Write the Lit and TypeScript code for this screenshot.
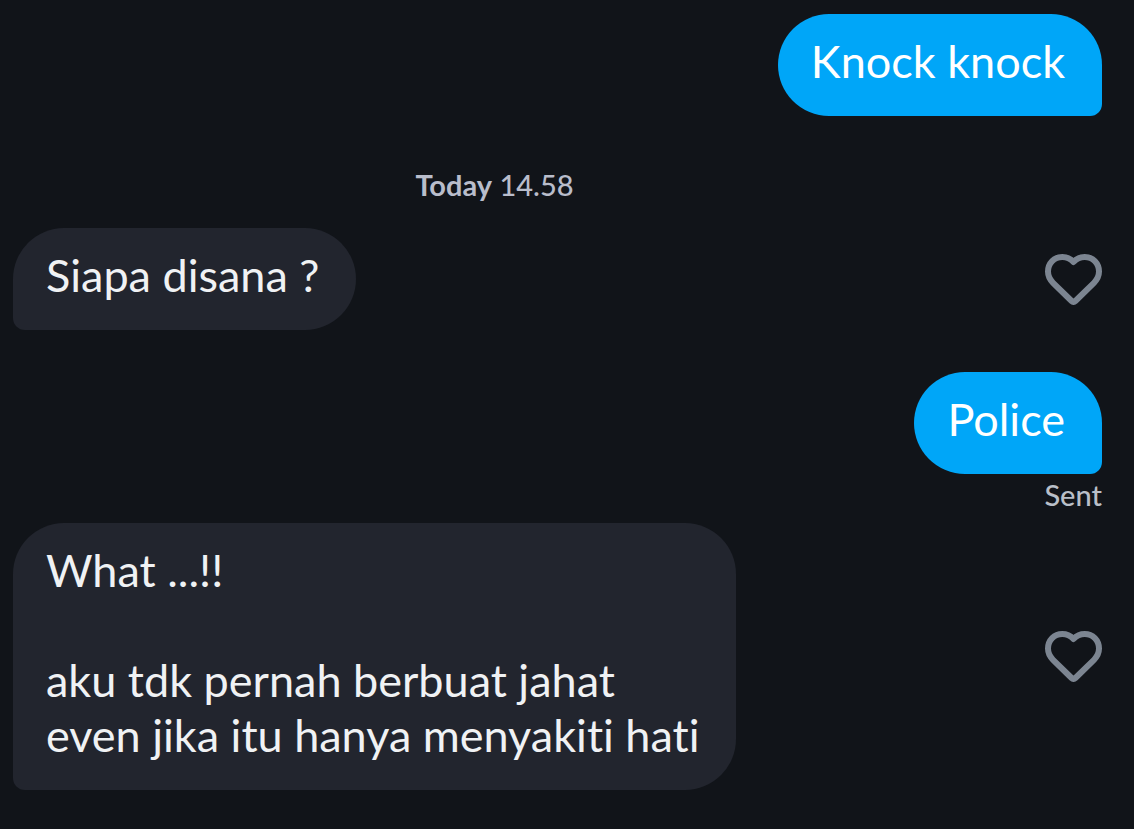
import { LitElement, html, css } from "lit";
import { customElement, property, state } from "lit/decorators.js";
import { classMap } from "lit/directives/class-map.js";

@customElement("like-button")
class LikeButton extends LitElement {
  @state() private liked = false;

  static styles = css`
    :host {
      display: block;
      flex: none;
    }
    .like {
      display: block;
      padding: 0;
      border: 0;
      background: none;
      color: #7c8591;
      cursor: pointer;
    }
    .icon {
      display: block;
      width: 57px;
      height: 51px;
      fill: none;
      stroke: currentColor;
      stroke-width: 6;
      stroke-linejoin: round;
      stroke-linecap: round;
    }
    .liked .icon {
      fill: currentColor;
    }
  `;

  render() {
    return html`
      <button
        class=${classMap({ like: true, liked: this.liked })}
        type="button"
        aria-label="Like message"
        aria-pressed=${this.liked}
        @click=${() => (this.liked = !this.liked)}
      >
        <svg class="icon" viewBox="0 0 57 51" aria-hidden="true">
          <path
            d="M28.5 8C25.5 4.8 21.8 3 17.3 3C9.3 3 3 9.3 3 17.6C3 22 4.8 25.6 8 28.8L26.6 47C27.8 48.1 29.2 48.1 30.4 47L49 28.8C52.2 25.6 54 22 54 17.6C54 9.3 47.7 3 39.7 3C35.2 3 31.5 4.8 28.5 8Z"
          />
        </svg>
      </button>
    `;
  }
}

@customElement("chat-message")
class ChatMessage extends LitElement {
  @property() text = "";
  @property({ type: Boolean }) own = false;
  @property() status = "";

  static styles = css`
    :host {
      display: block;
    }
    .row {
      display: flex;
      align-items: center;
      justify-content: space-between;
      gap: 24px;
    }
    .row.own {
      justify-content: flex-end;
    }
    .bubble {
      margin: 0;
      padding: 20px 37px 27px 33px;
      border-radius: 51px 51px 51px 12px;
      background: #22252e;
      color: #f0f2f4;
      font-size: 45px;
      line-height: 55px;
      white-space: pre-wrap;
    }
    .own .bubble {
      border-radius: 51px 51px 12px 51px;
      background: #00a6f8;
      color: #ffffff;
    }
    .status {
      margin: 4px 0 0;
      color: #b9bfc8;
      font-size: 29px;
      font-weight: 500;
      line-height: 34px;
      text-align: right;
    }
  `;

  render() {
    return html`
      <div class=${classMap({ row: true, own: this.own })}>
        <p class="bubble">${this.text}</p>
        ${this.own ? null : html`<like-button></like-button>`}
      </div>
      ${this.status ? html`<p class="status">${this.status}</p>` : null}
    `;
  }
}

@customElement("app-root")
class AppRoot extends LitElement {
  static styles = css`
    :host {
      display: block;
      box-sizing: border-box;
      min-height: 100vh;
      background: #111419;
      font-family: Lato, "Open Sans", sans-serif;
      font-variant-ligatures: none;
    }
    .chat {
      display: flex;
      flex-direction: column;
      padding: 14px 32px 39px 13px;
    }
    .stamp {
      margin: 52px 126px 26px 0;
      color: #b9bdcb;
      font-size: 29px;
      font-weight: 500;
      line-height: 34px;
      text-align: center;
    }
    .day {
      font-weight: 700;
    }
    .reply {
      margin-top: 42px;
    }
    .next {
      margin-top: 11px;
    }
  `;

  render() {
    return html`
      <main class="chat">
        <chat-message own text="Knock knock"></chat-message>
        <p class="stamp"><span class="day">Today</span> <time>14.58</time></p>
        <chat-message text="Siapa disana ?"></chat-message>
        <chat-message class="reply" own text="Police" status="Sent"></chat-message>
        <chat-message
          class="next"
          .text=${"What ...!!\n\naku tdk pernah berbuat jahat\neven jika itu hanya menyakiti hati"}
        ></chat-message>
      </main>
    `;
  }
}
